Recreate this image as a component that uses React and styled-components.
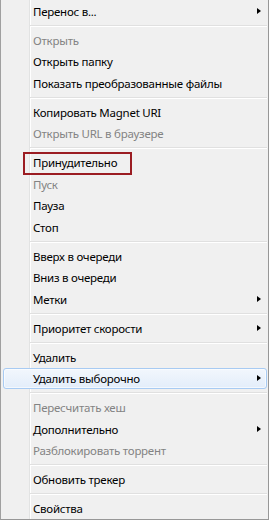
import React from 'react';
import styled, { createGlobalStyle } from 'styled-components';

const Global = createGlobalStyle`
  html, body {
    margin: 0;
    padding: 0;
    background: #ffffff;
  }
  body {
    font-family: "Noto Sans", "Open Sans", sans-serif;
  }
`;

const Menu = styled.ul`
  box-sizing: border-box;
  margin: 0;
  padding: 0 1px 0 2px;
  width: 269px;
  height: 520px;
  list-style-type: none;
  background-color: #f0f0f0;
  background-image: linear-gradient(
    to right,
    transparent 28px,
    #e2e3e3 28px,
    #e2e3e3 29px,
    #ffffff 29px,
    #ffffff 30px,
    transparent 30px
  );
  border-left: 1px solid #a0a0a0;
  border-right: 1px solid #979797;
  border-bottom: 1px solid #979797;
  font-size: 11.5px;
`;

const Item = styled.li`
  position: relative;
  box-sizing: border-box;
  display: flex;
  align-items: center;
  justify-content: space-between;
  height: 21.5px;
  padding: 1px 5px 0 29px;
  color: ${p => (p.disabled ? '#838383' : '#000000')};
  border: 1px solid ${p => (p.active ? '#a8cbf3' : 'transparent')};
  border-radius: 3px;
  background: ${p => (p.active ? 'linear-gradient(#f2f7fd, #e3edfa)' : 'transparent')};
  box-shadow: ${p => (p.active ? 'inset 0 0 0 1px rgba(255,255,255,0.6)' : 'none')};
  white-space: nowrap;

  ${p =>
    p.marked &&
    `
    &::after {
      content: '';
      position: absolute;
      left: 19px;
      top: -1px;
      width: 109px;
      height: 23px;
      box-sizing: border-box;
      border: 2px solid #9b1c22;
    }
  `}
`;

const Label = styled.span`
  line-height: 1;
  letter-spacing: -0.25px;
`;

const Arrow = styled.span`
  width: 0;
  height: 0;
  margin-top: -1px;
  border-top: 3.5px solid transparent;
  border-bottom: 3.5px solid transparent;
  border-left: 4px solid #000;
`;

const Separator = styled.li`
  height: 7.5px;
  margin-left: 27px;
  box-sizing: border-box;
  padding-top: 3px;

  &::before {
    content: '';
    display: block;
    height: 1px;
    background: #e0e0e0;
    border-bottom: 1px solid #ffffff;
  }
`;

const items = [
  { label: 'Перенос в...', sub: true },
  '-',
  { label: 'Открыть', disabled: true },
  { label: 'Открыть папку' },
  { label: 'Показать преобразованные файлы' },
  '-',
  { label: 'Копировать Magnet URI' },
  { label: 'Открыть URL в браузере', disabled: true },
  '-',
  { label: 'Принудительно', marked: true },
  { label: 'Пуск', disabled: true },
  { label: 'Пауза' },
  { label: 'Стоп' },
  '-',
  { label: 'Вверх в очереди' },
  { label: 'Вниз в очереди' },
  { label: 'Метки', sub: true },
  '-',
  { label: 'Приоритет скорости', sub: true },
  '-',
  { label: 'Удалить' },
  { label: 'Удалить выборочно', sub: true, active: true },
  '-',
  { label: 'Пересчитать хеш', disabled: true },
  { label: 'Дополнительно', sub: true },
  { label: 'Разблокировать торрент', disabled: true },
  '-',
  { label: 'Обновить трекер' },
  '-',
  { label: 'Свойства' },
];

const App = () => (
  <>
    <Global />
    <Menu>
      {items.map((it, i) =>
        it === '-' ? (
          <Separator key={i} />
        ) : (
          <Item key={i} disabled={it.disabled} active={it.active} marked={it.marked}>
            <Label>{it.label}</Label>
            {it.sub && <Arrow />}
          </Item>
        )
      )}
    </Menu>
  </>
);

export default App;
